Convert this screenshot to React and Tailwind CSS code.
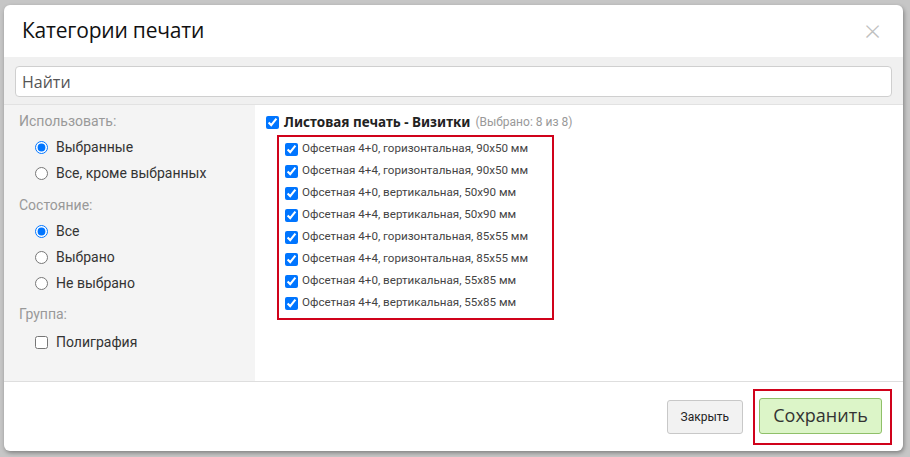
import { useState } from "react";

const items = [
  "Офсетная 4+0, горизонтальная, 90x50 мм",
  "Офсетная 4+4, горизонтальная, 90x50 мм",
  "Офсетная 4+0, вертикальная, 50x90 мм",
  "Офсетная 4+4, вертикальная, 50x90 мм",
  "Офсетная 4+0, горизонтальная, 85x55 мм",
  "Офсетная 4+4, горизонтальная, 85x55 мм",
  "Офсетная 4+0, вертикальная, 55x85 мм",
  "Офсетная 4+4, вертикальная, 55x85 мм",
];

function Radio({ name, label, checked, onChange }) {
  return (
    <label className="flex items-center h-[26px] pl-[16px] gap-[8px] text-[14px] text-[#333]">
      <input
        type="radio"
        name={name}
        checked={checked}
        onChange={onChange}
        className="w-[13px] h-[13px] m-0 accent-[#0075ff]"
      />
      {label}
    </label>
  );
}

export default function App() {
  const [use, setUse] = useState("sel");
  const [state, setState] = useState("all");
  const [group, setGroup] = useState(false);
  const [checked, setChecked] = useState(items.map(() => true));

  const allChecked = checked.every(Boolean);
  const count = checked.filter(Boolean).length;

  const toggle = (i) => {
    const next = [...checked];
    next[i] = !next[i];
    setChecked(next);
  };

  return (
    <div
      className="w-[910px] h-[457px] bg-[#c6c6c6] pt-[5px] pl-[4px] overflow-hidden"
      style={{ fontFamily: 'Roboto, "Noto Sans", sans-serif' }}
    >
      <div className="w-[899px] h-[446px] bg-white rounded-[6px] shadow-[1px_2px_4px_rgba(0,0,0,0.35)] flex flex-col overflow-hidden">
        {/* header */}
        <div className="h-[52px] flex items-center justify-between pl-[18px] pr-[22px] shrink-0">
          <h1 className="text-[21px] text-[#111] tracking-[-0.2px]" style={{ fontFamily: '"Open Sans", sans-serif' }}>
            Категории печати
          </h1>
          <button className="text-[#c0c0c0] text-[30px] leading-none font-extralight" style={{ fontFamily: '"Open Sans", sans-serif' }}>×</button>
        </div>

        {/* search */}
        <div className="bg-[#f0f0f0] h-[48px] pt-[9px] px-[11px] border-b border-[#e2e2e2] shrink-0">
          <input
            placeholder="Найти"
            className="w-full h-[31px] bg-white border border-[#cfcfcf] rounded-[4px] px-[6px] text-[16px] placeholder:text-[#555] outline-none"
            style={{ fontFamily: '"Open Sans", sans-serif' }}
          />
        </div>

        {/* body */}
        <div className="flex h-[276px] shrink-0">
          <div className="w-[251px] bg-[#f4f4f4] pl-[15px] pt-[3px]">
            <div className="text-[14px] text-[#999] h-[26px] flex items-center">Использовать:</div>
            <Radio name="use" label="Выбранные" checked={use === "sel"} onChange={() => setUse("sel")} />
            <Radio name="use" label="Все, кроме выбранных" checked={use === "ex"} onChange={() => setUse("ex")} />
            <div className="text-[14px] text-[#999] h-[26px] flex items-center mt-[6px]">Состояние:</div>
            <Radio name="st" label="Все" checked={state === "all"} onChange={() => setState("all")} />
            <Radio name="st" label="Выбрано" checked={state === "on"} onChange={() => setState("on")} />
            <Radio name="st" label="Не выбрано" checked={state === "off"} onChange={() => setState("off")} />
            <div className="text-[14px] text-[#999] h-[26px] flex items-center mt-[5px]">Группа:</div>
            <label className="flex items-center h-[30px] pl-[16px] gap-[8px] text-[14px] text-[#333]">
              <input
                type="checkbox"
                checked={group}
                onChange={() => setGroup(!group)}
                className="w-[13px] h-[13px] m-0 accent-[#0075ff]"
              />
              Полиграфия
            </label>
          </div>

          <div className="flex-1 pl-[11px] pt-[8px]">
            <label className="flex items-center h-[18px] gap-[5px]">
              <input
                type="checkbox"
                checked={allChecked}
                onChange={() => setChecked(items.map(() => !allChecked))}
                className="w-[13px] h-[13px] m-0 accent-[#0075ff]"
              />
              <span className="text-[13.5px] font-bold text-[#222]" style={{ fontFamily: '"Noto Sans", sans-serif' }}>
                Листовая печать - Визитки
              </span>
              <span className="text-[12px] text-[#999]">(Выбрано: {count} из 8)</span>
            </label>
            <div className="ml-[11px] mt-[4px] w-[277px] border-2 border-[#d0021b] pl-[6px] pt-[1px] pb-[4px]">
              {items.map((t, i) => (
                <label key={i} className="flex items-center h-[22px] gap-[4px] text-[11.6px] text-[#444]">
                  <input
                    type="checkbox"
                    checked={checked[i]}
                    onChange={() => toggle(i)}
                    className="w-[13px] h-[13px] m-0 accent-[#0075ff]"
                  />
                  {t}
                </label>
              ))}
            </div>
          </div>
        </div>

        {/* footer */}
        <div className="flex-1 border-t border-[#dedede] flex items-center justify-end pr-[11px] gap-[10px]">
          <button className="h-[34px] px-[13px] bg-[#f2f2f2] border border-[#c8c8c8] rounded-[3px] text-[12px] text-[#222]">
            Закрыть
          </button>
          <div className="border-2 border-[#d0021b] pl-[4px] pr-[8px] pt-[7px] pb-[9px]">
            <button
              className="h-[36px] w-[123px] bg-[#dcf5c8] border border-[#8fc069] rounded-[3px] text-[18px] text-[#333]"
              style={{ fontFamily: '"Open Sans", sans-serif' }}
            >
              Сохранить
            </button>
          </div>
        </div>
      </div>
    </div>
  );
}
